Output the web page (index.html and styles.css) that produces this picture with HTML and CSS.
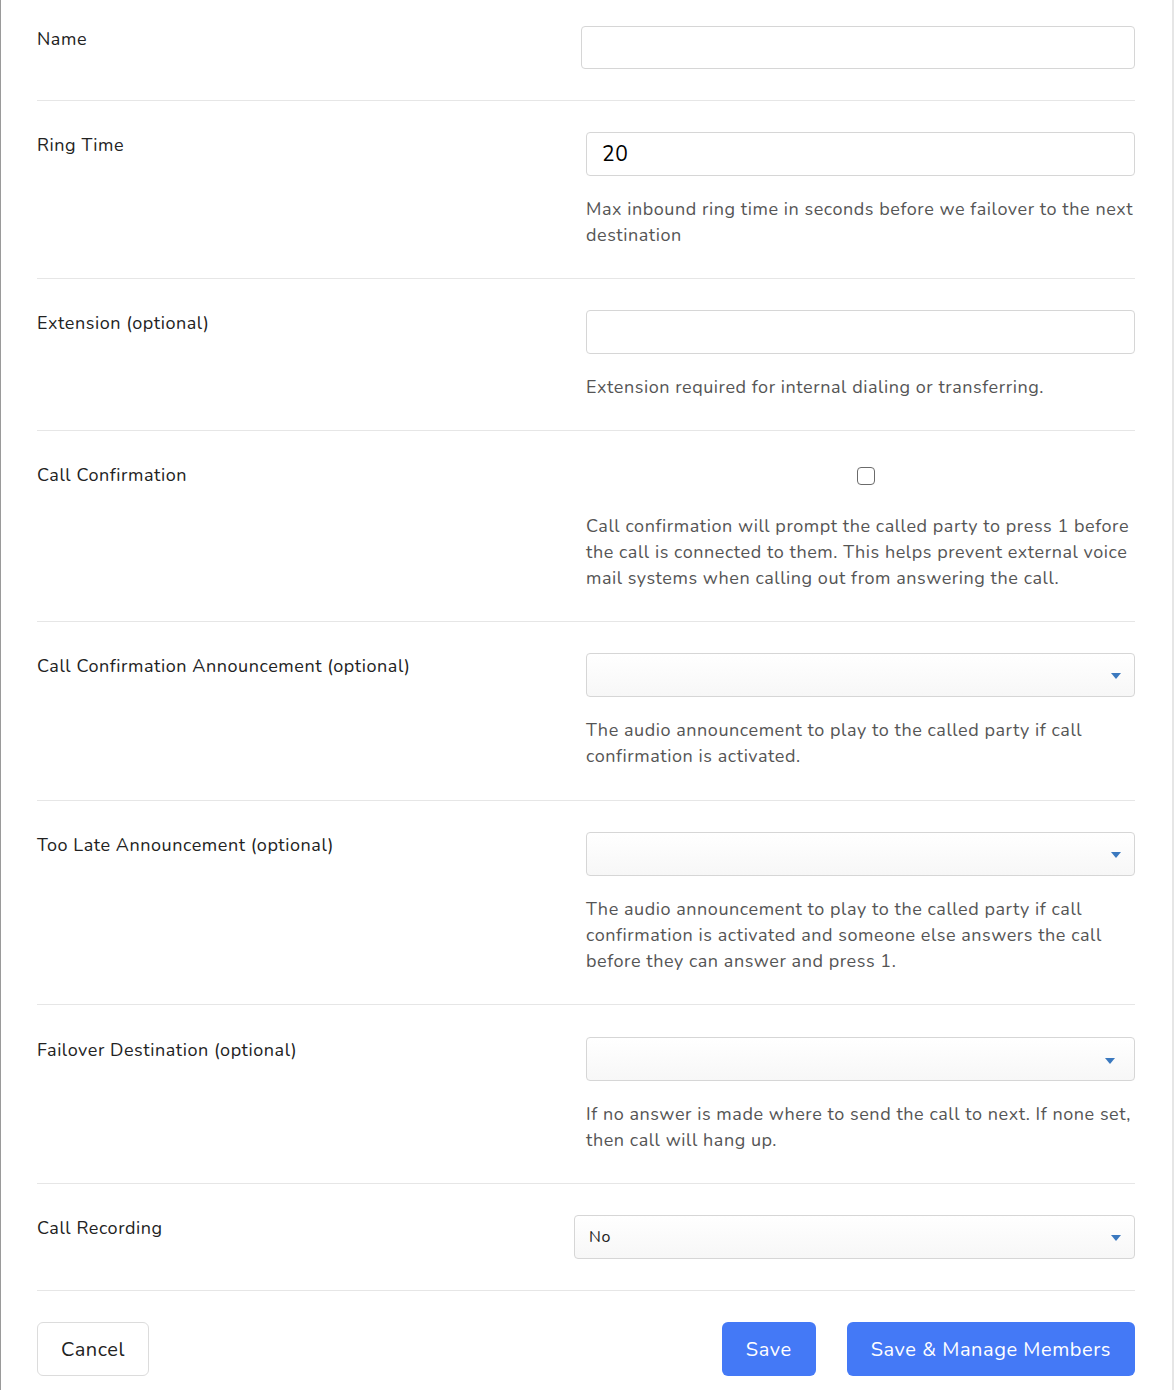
FILE: index.html
```html
<!DOCTYPE html>
<html>
<head>
  <title>Ring Group</title>
  <link rel="stylesheet" href="styles.css">
</head>
<body>
  <div class="modal">
    <form class="form">
      <div class="row">
        <label class="label" for="name">Name</label>
        <div class="field">
          <input class="input input-name" id="name" type="text">
        </div>
      </div>

      <div class="row">
        <label class="label" for="ringTime">Ring Time</label>
        <div class="field">
          <input class="input input-big" id="ringTime" type="text" value="20">
          <p class="help">Max inbound ring time in seconds before we failover to the next destination</p>
        </div>
      </div>

      <div class="row">
        <label class="label" for="extension">Extension (optional)</label>
        <div class="field">
          <input class="input" id="extension" type="text">
          <p class="help">Extension required for internal dialing or transferring.</p>
        </div>
      </div>

      <div class="row">
        <label class="label" for="confirm">Call Confirmation</label>
        <div class="field">
          <div class="check-wrap">
            <input class="check" id="confirm" type="checkbox">
          </div>
          <p class="help">Call confirmation will prompt the called party to press 1 before the call is connected to them. This helps prevent external voice mail systems when calling out from answering the call.</p>
        </div>
      </div>

      <div class="row">
        <label class="label" for="confirmAnn">Call Confirmation Announcement (optional)</label>
        <div class="field">
          <div class="select-wrap">
            <select class="select" id="confirmAnn"><option></option></select>
          </div>
          <p class="help">The audio announcement to play to the called party if call confirmation is activated.</p>
        </div>
      </div>

      <div class="row">
        <label class="label" for="lateAnn">Too Late Announcement (optional)</label>
        <div class="field">
          <div class="select-wrap">
            <select class="select" id="lateAnn"><option></option></select>
          </div>
          <p class="help">The audio announcement to play to the called party if call confirmation is activated and someone else answers the call before they can answer and press 1.</p>
        </div>
      </div>

      <div class="row">
        <label class="label" for="failover">Failover Destination (optional)</label>
        <div class="field">
          <div class="select-wrap select-failover">
            <select class="select" id="failover"><option></option></select>
          </div>
          <p class="help">If no answer is made where to send the call to next. If none set, then call will hang up.</p>
        </div>
      </div>

      <div class="row">
        <label class="label" for="recording">Call Recording</label>
        <div class="field">
          <div class="select-wrap select-recording">
            <select class="select" id="recording">
              <option>No</option>
              <option>Yes</option>
            </select>
          </div>
        </div>
      </div>

      <div class="actions">
        <button class="btn btn-cancel" type="button">Cancel</button>
        <div class="actions-right">
          <button class="btn btn-primary" type="submit">Save</button>
          <button class="btn btn-primary" type="button">Save &amp; Manage Members</button>
        </div>
      </div>
    </form>
  </div>
</body>
</html>
```

FILE: styles.css
```css
body {
  margin: 0;
  font-family: "Nunito", Lato, "Open Sans", sans-serif;
  letter-spacing: 0.55px;
  color: #222;
  background: #fff;
}
.modal {
  min-height: 1390px;
  box-sizing: border-box;
  border-left: 1px solid #9a9a9a;
  border-right: 2px solid #e6e6e6;
}
.form {
  padding: 26px 37px 0 36px;
}
.row {
  display: grid;
  grid-template-columns: 1fr 1fr;
  padding: 31px 0 30px;
  border-bottom: 1px solid #e6e6e6;
}
.row:first-child {
  padding-top: 0;
  padding-bottom: 31px;
}
.row:nth-child(5) {
  padding-bottom: 31px;
}
.row:nth-child(7) {
  padding-top: 32px;
}
.row:nth-child(8) {
  padding-bottom: 31px;
}
.label {
  padding-top: 1px;
  font-size: 18px;
  line-height: 24px;
  color: #222;
}
.input {
  display: block;
  box-sizing: border-box;
  width: 100%;
  height: 44px;
  padding: 0 16px;
  border: 1px solid #d6d6d6;
  border-radius: 4px;
  font-family: inherit;
  font-size: 18px;
  letter-spacing: inherit;
  color: #000;
  background: #fff;
}
.input-name {
  width: calc(100% + 5px);
  margin-left: -5px;
  height: 43px;
}
.input-big {
  font-size: 21px;
  padding-left: 15px;
}
.help {
  margin: 20px 0 0;
  font-size: 18px;
  line-height: 26px;
  color: #555;
}
.check-wrap {
  height: 31px;
  display: flex;
  align-items: center;
  justify-content: center;
  padding-left: 11px;
}
.check {
  appearance: none;
  width: 18px;
  height: 18px;
  margin: -4px 0 0;
  border: 1.5px solid #6b6b6b;
  border-radius: 4px;
  background: #fff;
}
.select-wrap {
  position: relative;
}
.select-wrap::after {
  content: "";
  position: absolute;
  right: 14px;
  top: 20px;
  border-left: 5px solid transparent;
  border-right: 5px solid transparent;
  border-top: 6px solid #3b79bf;
  pointer-events: none;
}
.select-failover::after {
  right: 20px;
  top: 21px;
}
.select-recording {
  margin-left: -12px;
}
.select {
  display: block;
  box-sizing: border-box;
  width: 100%;
  height: 44px;
  padding: 0 14px;
  border: 1px solid #d6d6d6;
  border-radius: 4px;
  appearance: none;
  background: linear-gradient(#fff, #f7f7f7);
  font-family: inherit;
  font-size: 16px;
  letter-spacing: inherit;
  color: #222;
}
.actions {
  display: flex;
  justify-content: space-between;
  padding-top: 31px;
}
.actions-right {
  display: flex;
  gap: 31px;
}
.btn {
  height: 54px;
  padding: 0 24px;
  border-radius: 6px;
  font-family: inherit;
  font-size: 20px;
  letter-spacing: inherit;
  cursor: pointer;
}
.btn-cancel {
  border: 1px solid #dcdcdc;
  background: #fff;
  color: #222;
  padding: 0 23px;
}
.btn-primary {
  border: none;
  background: #4479f6;
  color: #fff;
}
```
